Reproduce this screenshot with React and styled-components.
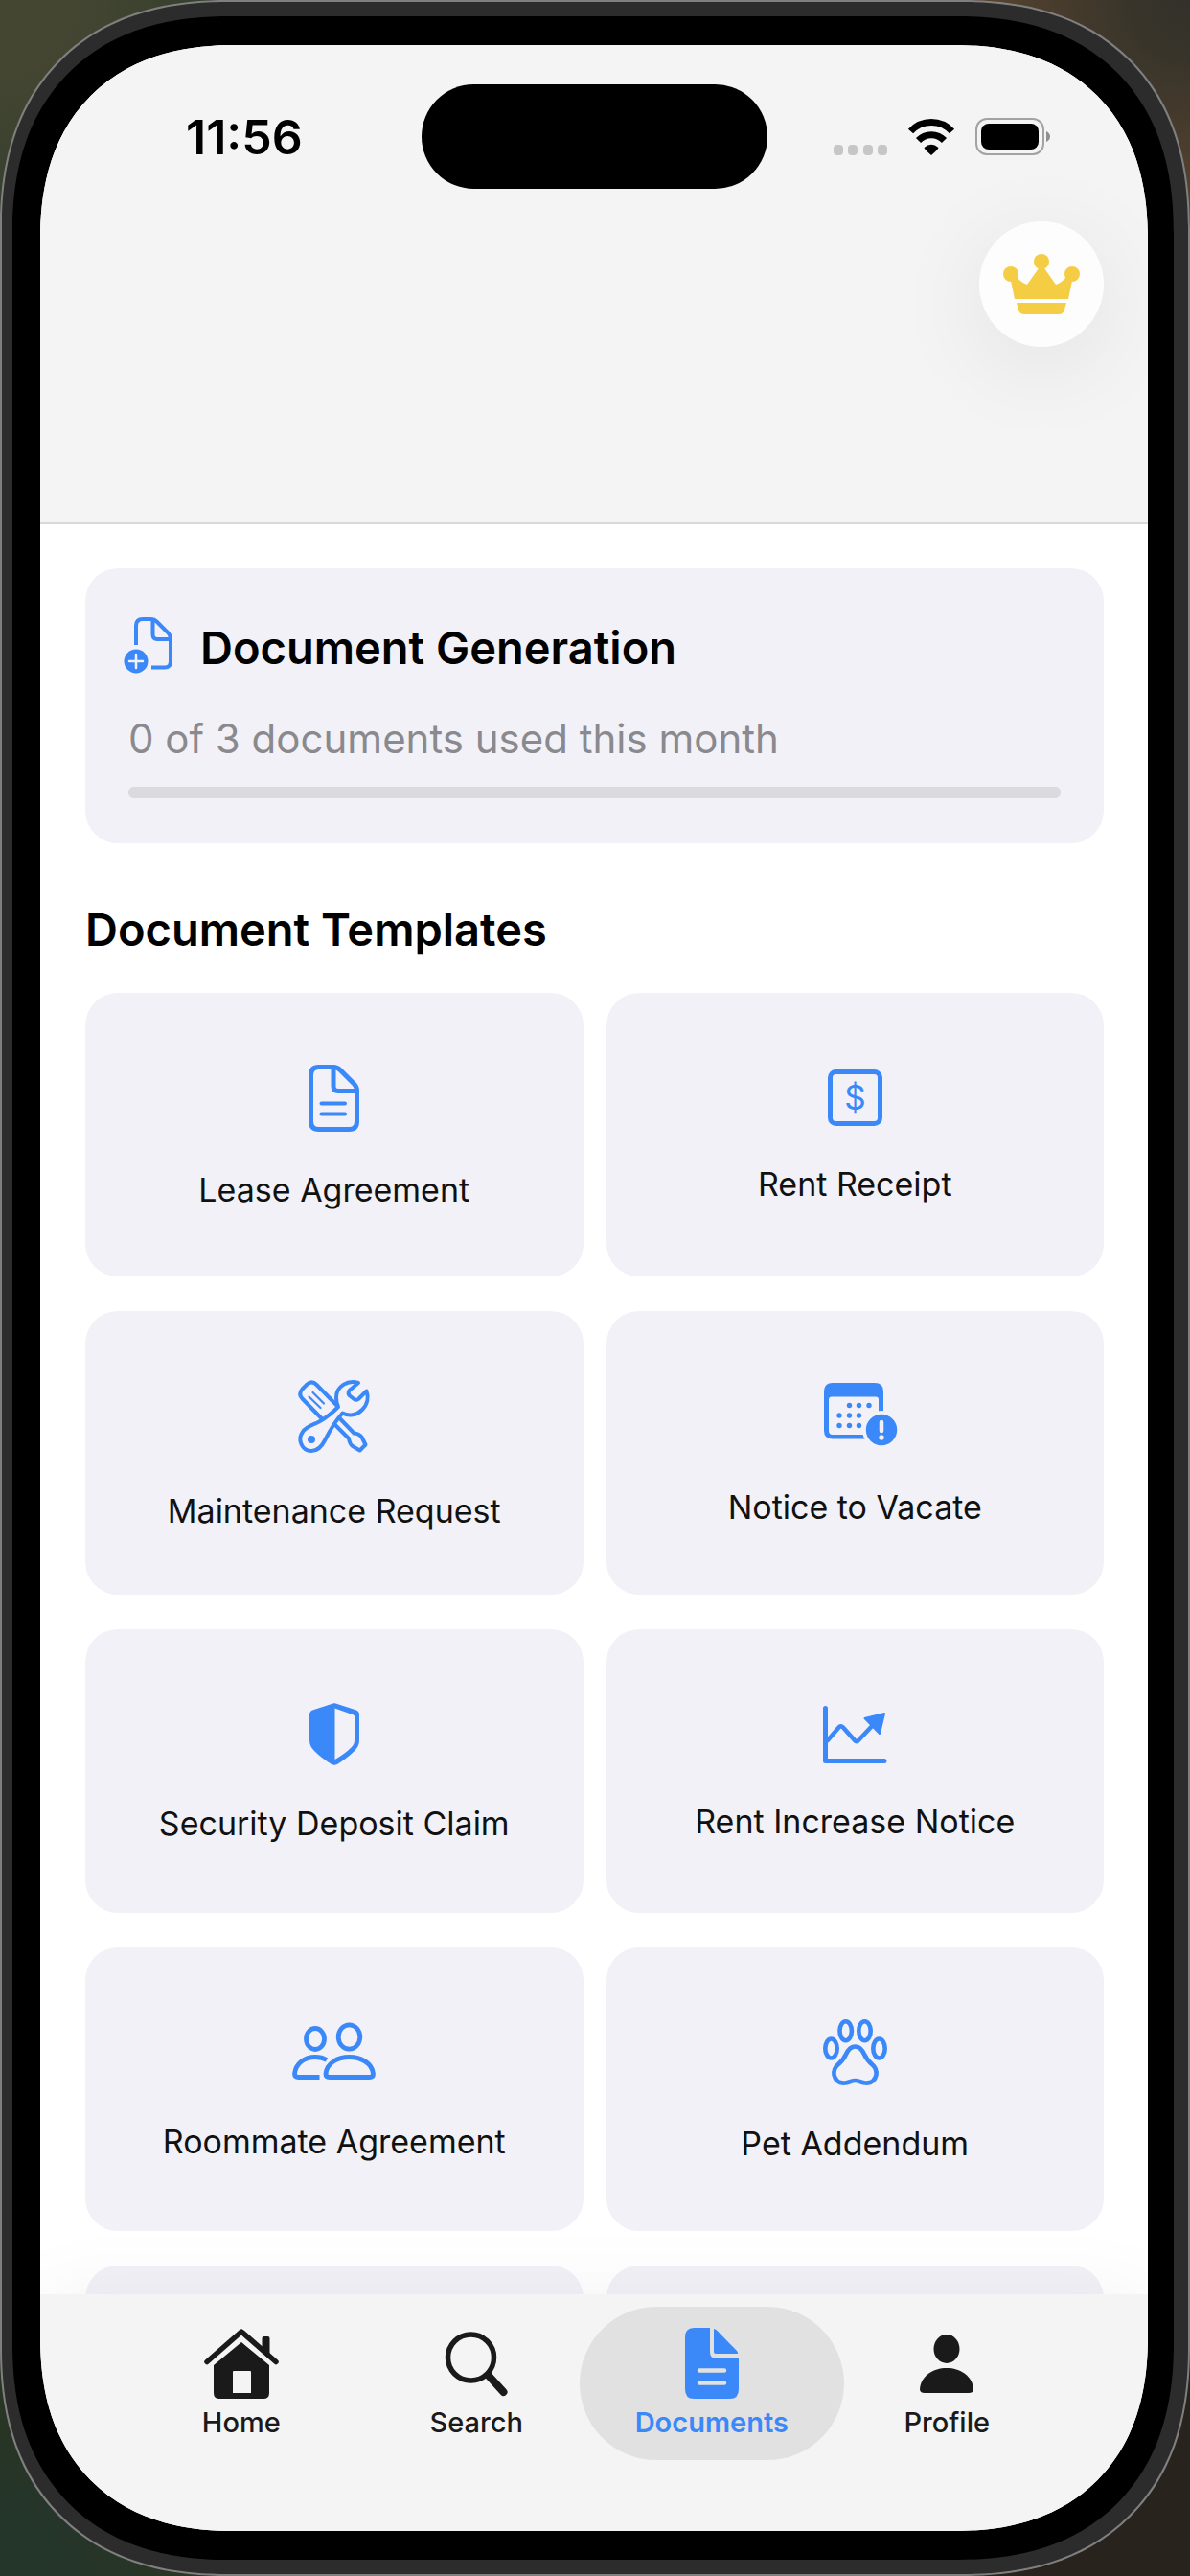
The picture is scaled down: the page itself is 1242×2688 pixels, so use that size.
import React from "react";
import styled, { createGlobalStyle } from "styled-components";

const BLUE = "#3b88f9";
const CARD = "#f2f1f7";
const BAR = "#f4f4f4";
const PILL = "#e1e1e1";
const INK = "#1a1a1a";

const GlobalStyle = createGlobalStyle`
  *, *::before, *::after { box-sizing: border-box; }
  body { margin: 0; font-family: Inter, "Liberation Sans", sans-serif; color: #000; }
  h1, h2, p { margin: 0; }
`;

/* ---------- device ---------- */

const Backdrop = styled.div`
  height: 100vh;
  background:
    radial-gradient(circle at 0 0, #454632 0, #454632 60px, #35402d 220px, transparent 420px),
    radial-gradient(circle at 100% 0, #33312a 0, #38342a 60px, #5c4630 240px, transparent 420px),
    radial-gradient(circle at 0 100%, #24352a 0, #24352a 60px, #2b3522 220px, transparent 420px),
    #28231c;
`;

const Frame = styled.div`
  display: flex;
  height: 100%;
  padding: 15px 15px 15px 11px;
  border: 2px solid #7f7f7f;
  border-radius: 216px;
  background: #2c2c2c;
  @supports (corner-shape: superellipse(1.2)) {
    border-radius: 238px;
    corner-shape: superellipse(1.2);
  }
`;

const Bezel = styled.div`
  display: flex;
  flex: 1;
  min-width: 0;
  padding: 30px 27px 30px 29px;
  border-radius: 204px;
  background: #000;
  @supports (corner-shape: superellipse(1.2)) {
    border-radius: 226px;
    corner-shape: superellipse(1.2);
  }
`;

const Screen = styled.div`
  display: flex;
  flex: 1;
  flex-direction: column;
  min-width: 0;
  overflow: hidden;
  border-radius: 181px;
  background: #fff;
  @supports (corner-shape: superellipse(1.2)) {
    border-radius: 203px;
    corner-shape: superellipse(1.2);
  }
`;

/* ---------- header ---------- */

const Header = styled.header`
  flex: none;
  min-height: 500px;
  padding-top: 41px;
  border-bottom: 2px solid #d9d9d9;
  background: ${BAR};
`;

const StatusBar = styled.div`
  display: grid;
  grid-template-columns: 1fr 361px 1fr;
  align-items: center;
`;

const Clock = styled.time`
  padding-left: 152px;
  font-size: 50px;
  font-weight: 600;
  line-height: 64px;
`;

const Island = styled.div`
  height: 109px;
  border-radius: 55px;
  background: #000;
`;

const StatusIcons = styled.div`
  display: flex;
  align-items: flex-end;
  justify-content: flex-end;
  gap: 22px;
  padding-right: 102px;
`;

const HeaderActions = styled.div`
  display: flex;
  justify-content: flex-end;
  padding: 34px 46px 0;
`;

const RoundButton = styled.button`
  display: grid;
  place-items: center;
  width: 130px;
  height: 131px;
  padding: 0;
  border: 0;
  border-radius: 50%;
  background: #fdfdfd;
  box-shadow: 0 20px 100px rgba(0, 0, 0, 0.08);
`;

/* ---------- content ---------- */

const Content = styled.main`
  flex: 1;
  min-height: 0;
  padding: 46px 46px 0 47px;
  overflow: hidden;
`;

const UsageCard = styled.section`
  padding: 50px 45px 47px;
  border-radius: 34px;
  background: ${CARD};
`;

const UsageTitleRow = styled.div`
  display: flex;
  align-items: center;
  gap: 29px;
`;

const Title = styled.h2`
  font-size: 47px;
  font-weight: 600;
  line-height: 60px;
`;

const SectionTitle = styled(Title)`
  margin: 60px 0 36px;
`;

const UsageText = styled.p`
  margin: 35px 0 23px;
  color: #8a8a8e;
  font-size: 42px;
  line-height: 54px;
`;

const Meter = styled.progress`
  display: block;
  width: 100%;
  height: 12px;
  border: 0;
  border-radius: 6px;
  appearance: none;
  background: #dadadf;
  &::-webkit-progress-bar { border-radius: 6px; background: #dadadf; }
  &::-webkit-progress-value { border-radius: 6px; background: ${BLUE}; }
`;

const TemplateGrid = styled.div`
  display: grid;
  grid-template-columns: 1fr 1fr;
  gap: 36px 24px;
`;

const TemplateCard = styled.button`
  display: flex;
  flex-direction: column;
  align-items: center;
  justify-content: center;
  gap: 45px;
  min-height: 296px;
  padding: 0;
  border: 0;
  border-radius: 34px;
  background: ${CARD};
  color: #111;
  font-family: inherit;
  font-size: 34px;
  line-height: 32px;
`;

/* ---------- tab bar ---------- */

const TabBar = styled.nav`
  display: grid;
  flex: none;
  grid-template-columns: repeat(4, 1fr);
  align-items: start;
  min-height: 247px;
  padding: 13px 87px 0;
  background: ${BAR};
  box-shadow: 0 0 80px rgba(0, 0, 0, 0.05);
`;

const Tab = styled.a`
  display: flex;
  flex-direction: column;
  align-items: center;
  gap: 9px;
  height: 160px;
  margin: 0 -15px;
  padding-top: 22px;
  border-radius: 80px;
  background: ${(p) => (p.$active ? PILL : "transparent")};
  color: ${(p) => (p.$active ? BLUE : INK)};
  font-size: 29px;
  font-weight: ${(p) => (p.$active ? 600 : 500)};
  line-height: 32px;
  text-decoration: none;
`;

const TabIcon = styled.span`
  display: grid;
  place-items: center;
  height: 74px;
`;

/* ---------- icons ---------- */

const Svg = styled.svg`
  display: block;
  flex: none;
  overflow: visible;
`;

function Icon({ w, h, children, ...rest }) {
  return (
    <Svg width={w} height={h} viewBox={`0 0 ${w} ${h}`} fill="none" aria-hidden="true" {...rest}>
      {children}
    </Svg>
  );
}

const line = { stroke: BLUE, strokeLinecap: "round", strokeLinejoin: "round" };

const SignalIcon = () => (
  <Icon w={56} h={11} fill="#c6c6c6">
    {[0, 15, 31, 46].map((x) => (
      <rect key={x} x={x} width="10" height="11" rx="4" />
    ))}
  </Icon>
);

const WifiIcon = () => (
  <Icon w={48} h={38}>
    <path d="M2.5 13A29 29 0 0 1 45.5 13" stroke="#000" strokeWidth="7" />
    <path d="M10.5 22.5A18.5 18.5 0 0 1 37.5 22.5" stroke="#000" strokeWidth="7" />
    <path d="M16.500 30Q24 23.500 31.500 30Q31 32 24 38Q17 32 16.500 30Z" fill="#000" />
  </Icon>
);

const BatteryIcon = () => (
  <Icon w={78} h={39}>
    <rect x="1" y="1" width="70" height="37" rx="11" stroke="#a2a2a2" strokeWidth="2" />
    <rect x="6" y="6" width="60" height="27" rx="8" fill="#000" />
    <path d="M74 14Q78 16 78 19.500T74 25Z" fill="#8f8f8f" />
  </Icon>
);

const CrownIcon = () => (
  <Icon w={80} h={63} fill="#f5cd45">
    <circle cx="8" cy="21" r="8" />
    <circle cx="40" cy="8" r="8" />
    <circle cx="72" cy="21" r="8" />
    <path d="M14 24Q19 30 25 32L37 15H43L55 32Q61 30 66 24L72 28L68 47H12L8 28Z" />
    <path d="M14 51H66L64 58Q63 63 58 63H22Q17 63 16 58Z" />
  </Icon>
);

const DocPlusIcon = () => (
  <Icon w={46} h={66}>
    <g {...line} strokeWidth="4">
      <path d="M8 30V10Q8 3 15 3H24Q27 3 29.500 5.500L42 18Q44 20.500 44 24V47Q44 53.500 38 53.500H24" strokeLinecap="butt" />
      <path d="M25.500 4V19Q25.500 24 30 24H43" />
    </g>
    <circle cx="8" cy="47" r="12.500" fill={BLUE} />
    <path d="M8 40V54M1 47H15" stroke={CARD} strokeWidth="2.500" strokeLinecap="round" />
  </Icon>
);

const LeaseIcon = () => (
  <Icon w={53} h={70}>
    <g {...line} strokeWidth="5">
      <path d="M10.500 2.500H26Q30 2.500 33 5.500L47.500 20Q50.500 23 50.500 27V59Q50.500 67.500 42.500 67.500H10.500Q2.500 67.500 2.500 59V11Q2.500 2.500 10.500 2.500Z" />
      <path d="M26 4V22.500Q26 27.500 31 27.500H49" />
    </g>
    <path d="M13.500 40.500H38M13.500 51.500H38" {...line} strokeWidth="4" />
  </Icon>
);

const DollarText = styled.text`
  font-family: Inter, "Liberation Sans", sans-serif;
  font-size: 35px;
  text-anchor: middle;
`;

const ReceiptIcon = () => (
  <Icon w={57} h={59}>
    <rect x="2.500" y="2.500" width="52" height="54" rx="6" {...line} strokeWidth="5" />
    <DollarText x="28.500" y="42" fill={BLUE}>$</DollarText>
  </Icon>
);

const ToolsIcon = () => (
  <Icon w={75} h={76}>
    <g {...line} strokeWidth="4">
      <path d="M40 26L19.500 5Q14.500 0 9.500 4.500L4.500 9.500Q0 14.500 4.500 19.500L25 40.500" />
      <path d="M38 46L53 61Q54 67 57 69L64.500 73.500L70.500 67.500L66.500 59.500Q64 56 58.500 55.500L44 40.500" />
      <path d="M63 3C52 -.500 40 6.500 40 18.500C40 22 40.500 25 42 28C36 34 30 39 23 43C16 47 9 48 5 54C-1 62 4 74 14 74C21 74 25 69 28 63C32 55 38 44 46.500 34.500C53 38 61 37 67 31C72.500 25.500 74 18 71.500 11.500L63 20Q61 21.500 58.500 20L54 16.500Q51.500 14 53.500 11Z" />
    </g>
    <path d="M11.500 17.500L23.500 29M15.500 13L27 24.500" {...line} strokeWidth="2.200" />
    <circle cx="14" cy="62" r="4" fill={BLUE} />
  </Icon>
);

const CalendarIcon = () => (
  <Icon w={88} h={69} fill={BLUE}>
    <path
      fillRule="evenodd"
      d="M21 0H65Q74 0 74 9V50Q74 58.500 65 58.500H21Q12 58.500 12 50V9Q12 0 21 0ZM20 14.500Q17 14.500 17 17.500V49.500Q17 54 21 54H65Q69 54 69 49.500V17.500Q69 14.500 66 14.500Z"
    />
    {[
      [38.5, 23.5], [48.5, 23.5], [59, 23.5],
      [28, 34], [38.5, 34], [48.5, 34],
      [28, 44.5], [38.5, 44.5], [48.5, 44.5],
    ].map(([x, y]) => (
      <circle key={`${x}-${y}`} cx={x} cy={y} r="2.700" />
    ))}
    <circle cx="72" cy="49" r="20" fill={CARD} />
    <circle cx="72" cy="49" r="16.200" />
    <path d="M72 41V50" stroke={CARD} strokeWidth="4.500" strokeLinecap="round" />
    <circle cx="72" cy="57" r="2.700" fill={CARD} />
  </Icon>
);

const ShieldIcon = () => (
  <Icon w={52} h={65} fill={BLUE}>
    <path
      fillRule="evenodd"
      d="M23 1Q26 -.500 29 1L49 7.500Q52 9 52 12V39Q52 45 47 50Q40 57 29 64Q26 65.500 23 64Q12 57 5 50Q0 45 0 39V12Q0 9 3 7.500ZM26.500 5.500V59Q37 53 43.500 46.500Q47 43 47 39V14.500Q47 13 46 12.500Z"
    />
  </Icon>
);

const ChartIcon = () => (
  <Icon w={66} h={60}>
    <path d="M2.500 2.500V57.500H64" {...line} strokeWidth="5" />
    <path d="M4 37L16.500 22.500Q18.500 20 21 22.500L33 36Q35 38.500 37 36L53 19" {...line} strokeWidth="4.500" strokeLinecap="butt" />
    <path d="M64 8L43.500 13L59 29Z" fill={BLUE} {...line} strokeWidth="2" />
  </Icon>
);

const PeopleIcon = () => (
  <Icon w={87} h={64}>
    <g {...line} strokeWidth="4.800">
      <ellipse cx="24" cy="17.500" rx="9.500" ry="11" />
      <ellipse cx="59.500" cy="15.500" rx="11.300" ry="12.700" />
      <path d="M39 57.500Q35 57.500 35 54C36 43 47 36.500 59.500 36.500S83.500 43 84.500 54Q84.500 57.500 80.500 57.500Z" />
      <path d="M28.500 57.500H6.500Q2.500 57.500 2.500 54C3.500 43 13 36.500 24 36.500Q31 36.500 36 39.500" strokeLinecap="butt" />
    </g>
  </Icon>
);

const PawIcon = () => (
  <Icon w={67} h={69}>
    <g {...line} strokeWidth="4.600">
      <ellipse cx="8.500" cy="30.500" rx="6.200" ry="10" />
      <ellipse cx="23.700" cy="12.200" rx="6.200" ry="10" />
      <ellipse cx="43.500" cy="12.200" rx="6.200" ry="10" />
      <ellipse cx="58.500" cy="30.500" rx="6.200" ry="10" />
      <path d="M33.500 28.500C38 28.500 40.500 31 43 36.500C45.500 42 48 44.500 51.500 47.500C55 50.500 56 54 55.500 58C54 64.500 49.500 67 44 66.500C40 66 37 64 33.500 64S27 66 23 66.500C17.500 67 13 64.500 11.500 58C11 54 12 50.500 15.500 47.500C19 44.500 21.500 42 24 36.500C26.500 31 29 28.500 33.500 28.500Z" />
    </g>
  </Icon>
);

const HomeIcon = () => (
  <Icon w={78} h={73} fill={INK}>
    <path d="M3 34.500L39 3L75 34.500" fill="none" stroke={INK} strokeWidth="5.500" strokeLinecap="round" strokeLinejoin="round" />
    <path d="M60.500 24V10Q60.500 8 62.500 8H66.500Q68.500 8 68.500 10V31Z" />
    <path fillRule="evenodd" d="M39 14L68 38V67Q68 73 62 73H16Q10 73 10 67V38ZM31 44Q30 44 30 45V67H49V45Q49 44 48 44Z" />
  </Icon>
);

const SearchIcon = () => (
  <Icon w={65} h={67}>
    <circle cx="26.500" cy="27" r="24" stroke={INK} strokeWidth="5.500" />
    <path d="M45 46L60.500 63" stroke={INK} strokeWidth="8" strokeLinecap="round" />
  </Icon>
);

const DocumentsIcon = () => (
  <Icon w={56} h={74} fill={BLUE}>
    <path d="M9 0H26V25Q26 32 32 32H56V64Q56 74 47 74H9Q0 74 0 64V10Q0 0 9 0Z" />
    <path d="M30 1Q32 1 34 3.500L54 24Q56 27 54.500 27H32Q30 27 30 25Z" />
    <path d="M15 44.500H41M15 57.500H41" stroke={PILL} strokeWidth="4.500" strokeLinecap="round" />
  </Icon>
);

const ProfileIcon = () => (
  <Icon w={56} h={61} fill={INK}>
    <ellipse cx="28" cy="15" rx="13.500" ry="15" />
    <path d="M5 61Q0 61 0 57C1 43 14 35 28 35S55 43 56 57Q56 61 51 61Z" />
  </Icon>
);

/* ---------- data ---------- */

const templates = [
  ["Lease Agreement", LeaseIcon],
  ["Rent Receipt", ReceiptIcon],
  ["Maintenance Request", ToolsIcon],
  ["Notice to Vacate", CalendarIcon],
  ["Security Deposit Claim", ShieldIcon],
  ["Rent Increase Notice", ChartIcon],
  ["Roommate Agreement", PeopleIcon],
  ["Pet Addendum", PawIcon],
];

const tabs = [
  ["Home", HomeIcon],
  ["Search", SearchIcon],
  ["Documents", DocumentsIcon],
  ["Profile", ProfileIcon],
];

export default function App() {
  return (
    <Backdrop>
      <GlobalStyle />
      <Frame>
        <Bezel>
          <Screen>
            <Header>
              <StatusBar>
                <Clock>11:56</Clock>
                <Island />
                <StatusIcons>
                  <SignalIcon />
                  <WifiIcon />
                  <BatteryIcon />
                </StatusIcons>
              </StatusBar>
              <HeaderActions>
                <RoundButton type="button">
                  <CrownIcon />
                </RoundButton>
              </HeaderActions>
            </Header>

            <Content>
              <UsageCard>
                <UsageTitleRow>
                  <DocPlusIcon />
                  <Title>Document Generation</Title>
                </UsageTitleRow>
                <UsageText id="usage">0 of 3 documents used this month</UsageText>
                <Meter value={0} max={3} aria-labelledby="usage" />
              </UsageCard>

              <SectionTitle>Document Templates</SectionTitle>
              <TemplateGrid>
                {templates.map(([name, Glyph]) => (
                  <TemplateCard key={name} type="button">
                    <Glyph />
                    <span>{name}</span>
                  </TemplateCard>
                ))}
                <TemplateCard as="div" />
                <TemplateCard as="div" />
              </TemplateGrid>
            </Content>

            <TabBar>
              {tabs.map(([name, Glyph]) => {
                const active = name === "Documents";
                return (
                  <Tab key={name} href={`#${name.toLowerCase()}`} $active={active} aria-current={active ? "page" : undefined}>
                    <TabIcon>
                      <Glyph />
                    </TabIcon>
                    {name}
                  </Tab>
                );
              })}
            </TabBar>
          </Screen>
        </Bezel>
      </Frame>
    </Backdrop>
  );
}
